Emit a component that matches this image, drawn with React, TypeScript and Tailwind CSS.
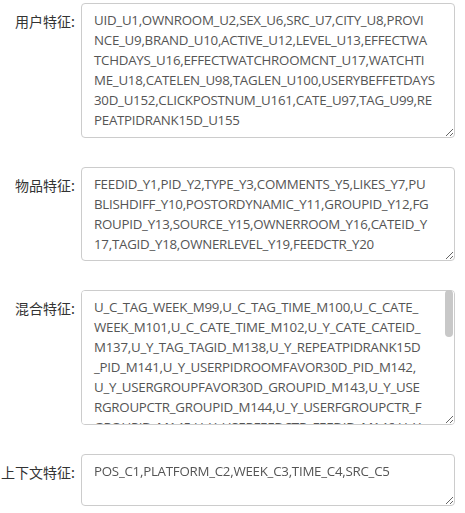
import React from "react";

// line breaks follow the form's rendered wrapping
const features = [
  {
    label: "用户特征:",
    height: "h-[135px]",
    lines: [
      "UID_U1,OWNROOM_U2,SEX_U6,SRC_U7,CITY_U8,PROVI",
      "NCE_U9,BRAND_U10,ACTIVE_U12,LEVEL_U13,EFFECTWA",
      "TCHDAYS_U16,EFFECTWATCHROOMCNT_U17,WATCHTI",
      "ME_U18,CATELEN_U98,TAGLEN_U100,USERYBEFFETDAYS",
      "30D_U152,CLICKPOSTNUM_U161,CATE_U97,TAG_U99,RE",
      "PEATPIDRANK15D_U155",
    ],
  },
  {
    label: "物品特征:",
    height: "h-[94px]",
    lines: [
      "FEEDID_Y1,PID_Y2,TYPE_Y3,COMMENTS_Y5,LIKES_Y7,PU",
      "BLISHDIFF_Y10,POSTORDYNAMIC_Y11,GROUPID_Y12,FG",
      "ROUPID_Y13,SOURCE_Y15,OWNERROOM_Y16,CATEID_Y",
      "17,TAGID_Y18,OWNERLEVEL_Y19,FEEDCTR_Y20",
    ],
  },
  {
    label: "混合特征:",
    height: "h-[135px]",
    scroll: true,
    lines: [
      "U_C_TAG_WEEK_M99,U_C_TAG_TIME_M100,U_C_CATE_",
      "WEEK_M101,U_C_CATE_TIME_M102,U_Y_CATE_CATEID_",
      "M137,U_Y_TAG_TAGID_M138,U_Y_REPEATPIDRANK15D",
      "_PID_M141,U_Y_USERPIDROOMFAVOR30D_PID_M142,",
      "U_Y_USERGROUPFAVOR30D_GROUPID_M143,U_Y_USE",
      "RGROUPCTR_GROUPID_M144,U_Y_USERFGROUPCTR_F",
      "GROUPID_M145,U_Y_USERFEEDCTR_FEEDID_M146,U_Y",
      "_USERCATECTR_CATEID_M147,U_Y_USERTAGCTR_TAGI",
      "D_M148,U_Y_USERSOURCECTR_SOURCE_M149,U_Y_US",
      "EROWNERCTR_OWNERROOM_M150,U_Y_USERTYPECTR",
      "_TYPE_M151,U_Y_USERLEVELCTR_OWNERLEVEL_M15",
      "2,U_Y_USERPIDCLICK7D_PID_M153,U_Y_USERGROUP",
      "CLICK7D_GROUPID_M154,U_Y_USERCATECLICK7D_CA",
      "TEID_M155,U_Y_USERTAGCLICK7D_TAGID_M156,U_Y",
      "_USERROOMCLICK7D_OWNERROOM_M157,U_Y_USERPI",
      "DLIKE30D_PID_M158,U_Y_USERGROUPLIKE30D_GROU",
      "PID_M159,U_Y_USERCATELIKE30D_CATEID_M160",
    ],
  },
  {
    label: "上下文特征:",
    height: "h-[52px]",
    lines: ["POS_C1,PLATFORM_C2,WEEK_C3,TIME_C4,SRC_C5"],
  },
];

export default function App() {
  return (
    <div className="flex w-[465px] flex-col gap-[29px] bg-white pt-[3px] font-['Open_Sans','Noto_Sans_CJK_SC',sans-serif]">
      {features.map((item) => (
        <div key={item.label} className="flex items-start">
          <label className="w-[81px] shrink-0 pr-[6px] pt-[8px] text-right text-[14px] leading-[20px] text-[#333] font-['Noto_Sans_CJK_SC',sans-serif] whitespace-nowrap">
            {item.label}
          </label>
          <div className="relative">
            <textarea
              readOnly
              defaultValue={item.lines.join("\n")}
              className={`${item.height} block w-[374px] rounded-[4px] border border-[#ccc] bg-white px-[12px] py-[6px] text-[13.3px] tracking-[-0.25px] leading-[20px] text-[#555] outline-none [&::-webkit-scrollbar]:w-[8px] [&::-webkit-scrollbar-track]:bg-transparent [&::-webkit-scrollbar-thumb]:rounded-[4px] [&::-webkit-scrollbar-thumb]:bg-[#c8c8c8] [&::-webkit-scrollbar-corner]:bg-transparent`}
            />
            {item.scroll && (
              <div className="pointer-events-none absolute right-[2px] top-0 h-[47px] w-[8px] rounded-[4px] bg-[#c8c8c8]" />
            )}
          </div>
        </div>
      ))}
    </div>
  );
}
